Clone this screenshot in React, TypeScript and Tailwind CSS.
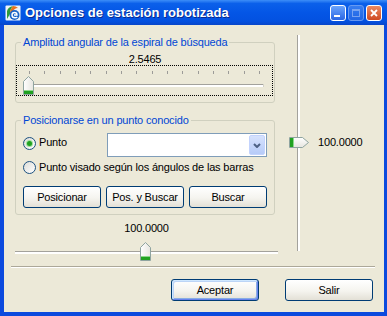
import type { ReactNode } from "react";

const ticks = Array.from({ length: 16 }, (_, i) => 12 + i * 15.33);

function AppIcon() {
  return (
    <svg width="16" height="16" viewBox="0 0 16 16" className="shrink-0">
      <rect x="0.5" y="0.5" width="15" height="15" rx="1" fill="#eef3f8" />
      <path d="M2 14 L2 6 Q3 2 8 1 Q5 4 5 9 Z" fill="#2f9a3a" />
      <path d="M5 9 Q5 4 8 1 Q11 1 13 3 Q9 3 7 8 Z" fill="#e8721e" />
      <circle cx="9.5" cy="10" r="5" fill="#1a64c8" />
      <path d="M7 10 Q7 7.5 9.5 7.5 Q12 7.5 12 10 L9 10 M7 10 Q7 12.8 10 12.8 Q11.5 12.8 12.3 12" fill="none" stroke="#ffffff" strokeWidth="1.4" />
    </svg>
  );
}

function ThumbUp() {
  return (
    <svg width="11" height="19" viewBox="0 0 11 19">
      <defs>
        <linearGradient id="thumb-up" x1="0" y1="0" x2="1" y2="0">
          <stop offset="0" stopColor="#ffffff" />
          <stop offset="1" stopColor="#e6e5df" />
        </linearGradient>
      </defs>
      <path d="M0.5 18.5V5.5L5.5 0.5L10.5 5.5V18.5Z" fill="url(#thumb-up)" stroke="#8fa4a0" />
      <rect x="1" y="14" width="9" height="1" fill="#8bd98b" />
      <rect x="1" y="15" width="9" height="3" fill="#21a121" />
    </svg>
  );
}

function ThumbRight() {
  return (
    <svg width="20" height="11" viewBox="0 0 20 11">
      <defs>
        <linearGradient id="thumb-right" x1="0" y1="0" x2="0" y2="1">
          <stop offset="0" stopColor="#ffffff" />
          <stop offset="1" stopColor="#e6e5df" />
        </linearGradient>
      </defs>
      <path d="M0.5 0.5H13.5L19.5 5.5L13.5 10.5H0.5Z" fill="url(#thumb-right)" stroke="#8fa4a0" />
      <rect x="1" y="1" width="3" height="9" fill="#21a121" />
      <rect x="4" y="1" width="1" height="9" fill="#8bd98b" />
    </svg>
  );
}

function Radio({ checked }: { checked?: boolean }) {
  return (
    <span className="flex size-[13px] shrink-0 items-center justify-center rounded-full border border-[#1c5180] bg-[linear-gradient(135deg,#dcdcd7,#ffffff)]">
      {checked && <span className="size-[5px] rounded-full bg-[#21a121] shadow-[0_0_0_1px_#9ee09e]" />}
    </span>
  );
}

function XpButton({ children, isDefault, className }: { children: ReactNode; isDefault?: boolean; className?: string }) {
  return (
    <button
      className={`flex h-[22px] items-center justify-center rounded-[3px] border border-[#003c74] bg-[linear-gradient(to_bottom,#ffffff,#f5f4ef_55%,#e3e0d6)] text-black ${
        isDefault
          ? "shadow-[inset_1px_1px_0_#cee7ff,inset_-1px_-1px_0_#6982ee,inset_2px_2px_0_#bcd4f6,inset_-2px_-2px_0_#89ade4]"
          : ""
      } ${className ?? ""}`}
    >
      {children}
    </button>
  );
}

function GroupBox({ title, children, className }: { title: string; children: ReactNode; className?: string }) {
  return (
    <fieldset className={`w-[260px] rounded-[3px] border border-[#d0d0bf] ${className ?? ""}`}>
      <legend className="ml-[5px] px-[2px] leading-[13px] text-[#0046d5]">{title}</legend>
      {children}
    </fieldset>
  );
}

export default function App() {
  return (
    <div className="flex h-[316px] w-[387px] flex-col font-['Liberation_Sans',Arial,sans-serif] text-[11px] tracking-[-0.17px] text-black">
      {/* title bar */}
      <div className="flex h-[25px] shrink-0 items-center bg-[linear-gradient(to_bottom,#3d8ef8_0%,#0b60ea_14%,#0456e6_50%,#0351e0_85%,#0846c9_100%)] pl-[5px] pr-[5px]">
        <AppIcon />
        <span className="ml-[4px] text-[13px] font-bold tracking-normal text-white [text-shadow:1px_1px_0_#0a2a8c]">
          Opciones de estación robotizada
        </span>
        <div className="ml-auto flex gap-[2px]">
          <div className="flex size-[16px] items-end rounded-[3px] border border-white bg-[linear-gradient(to_bottom,#6aa4fc,#2a66e4)] pb-[3px] pl-[3px]">
            <div className="h-[2px] w-[6px] bg-white" />
          </div>
          <div className="flex size-[16px] items-center justify-center rounded-[3px] border border-[#8fb4f6] bg-[linear-gradient(to_bottom,#4b8bf4,#2d6ee6)] opacity-70">
            <div className="size-[8px] border border-[#a9c4f6] border-t-2" />
          </div>
          <div className="flex size-[16px] items-center justify-center rounded-[3px] border border-white bg-[linear-gradient(to_bottom,#ec8a62,#cf4a22)]">
            <svg width="8" height="8" viewBox="0 0 8 8">
              <path d="M1 1L7 7M7 1L1 7" stroke="#ffffff" strokeWidth="1.8" />
            </svg>
          </div>
        </div>
      </div>

      {/* client area */}
      <div className="flex flex-1 flex-col border-b-4 border-l-4 border-r-[3px] border-[#0b4ade] bg-[#ece9d8]">
        <div className="flex items-start pl-[11px] pt-[10px]">
          {/* left column */}
          <div className="mt-[1px] flex w-[263px] flex-col">
            <GroupBox title="Amplitud angular de la espiral de búsqueda" className="pb-[6px]">
              <div className="mt-[4px] text-center leading-[12px]">2.5465</div>
              <div className="h-[31px] w-[257px] border border-dotted border-black">
                <svg width="255" height="29" viewBox="0 0 255 29">
                  {ticks.map((x) => (
                    <rect key={x} x={Math.round(x)} y="5" width="1" height="3" fill="#9c9b98" />
                  ))}
                  <rect x="8" y="18" width="238" height="1" fill="#a3a29c" />
                  <rect x="8" y="19" width="238" height="2" fill="#ffffff" />
                  <rect x="246" y="18" width="1" height="3" fill="#d4d2c8" />
                  <g transform="translate(6,10)">
                    <ThumbUp />
                  </g>
                </svg>
              </div>
            </GroupBox>

            <GroupBox title="Posicionarse en un punto conocido" className="mt-[11px] pb-[6px]">
              <div className="mt-[6px] flex items-start pl-[7px]">
                <div className="mt-[4px]">
                  <Radio checked />
                </div>
                <span className="ml-[3px] mt-[3px] leading-[13px]">Punto</span>
                <div className="ml-auto mr-[7px] flex h-[24px] w-[160px] border border-[#7f9db9] bg-white p-px">
                  <div className="flex-1" />
                  <div className="flex w-[16px] items-center justify-center rounded-[2px] border border-[#c3d3fd] bg-[linear-gradient(to_bottom,#d6e2fd,#b6cbf8)]">
                    <svg width="8" height="5" viewBox="0 0 8 5">
                      <path d="M1 1L4 4L7 1" fill="none" stroke="#4d6185" strokeWidth="2" />
                    </svg>
                  </div>
                </div>
              </div>
              <div className="mt-[4px] flex items-center pl-[7px]">
                <Radio />
                <span className="ml-[3px] leading-[13px]">Punto visado según los ángulos de las barras</span>
              </div>
              <div className="mt-[12px] flex gap-[5px] pl-[7px]">
                <XpButton className="w-[78px]">Posicionar</XpButton>
                <XpButton className="w-[78px]">Pos. y Buscar</XpButton>
                <XpButton className="w-[78px]">Buscar</XpButton>
              </div>
            </GroupBox>

            <div className="mt-[7px] text-center leading-[13px]">100.0000</div>
            <div className="relative mt-[1px] h-[26px]">
              <div className="mt-[15px] h-px bg-[#a3a29c]" />
              <div className="h-[2px] bg-white" />
              <div className="absolute left-[125px] top-[6px] flex">
                <ThumbUp />
              </div>
            </div>
          </div>

          {/* right vertical slider */}
          <div className="ml-[11px] flex items-start">
            <div className="relative flex h-[216px] w-[20px]">
              <div className="ml-[8px] h-full w-px bg-[#a3a29c]" />
              <div className="h-full w-[2px] bg-white" />
              <div className="absolute left-0 top-[102px] flex">
                <ThumbRight />
              </div>
            </div>
            <span className="ml-[9px] mt-[101px] leading-[13px]">100.0000</span>
          </div>
        </div>

        <div className="ml-[7px] mt-[4px] w-[364px]">
          <div className="h-px bg-[#aca899]" />
          <div className="h-px bg-white" />
        </div>

        <div className="mr-[11px] mt-[11px] flex justify-end gap-[26px]">
          <XpButton isDefault className="w-[88px]">Aceptar</XpButton>
          <XpButton className="w-[88px]">Salir</XpButton>
        </div>
      </div>
    </div>
  );
}
